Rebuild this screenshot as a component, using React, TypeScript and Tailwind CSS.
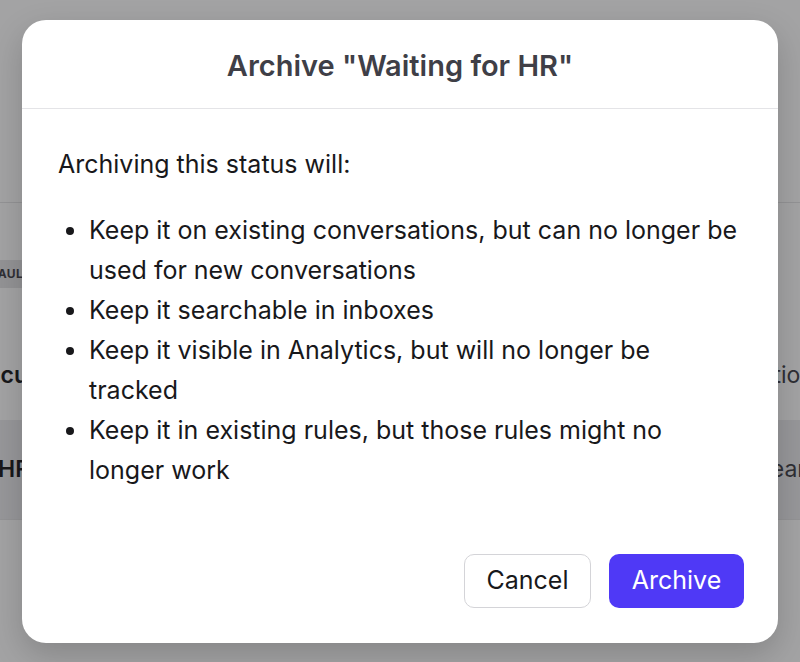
const items = [
  "Keep it on existing conversations, but can no longer be used for new conversations",
  "Keep it searchable in inboxes",
  "Keep it visible in Analytics, but will no longer be tracked",
  "Keep it in existing rules, but those rules might no longer work",
];

function BackgroundPage() {
  return (
    <div className="flex h-[662px] w-[800px] flex-col overflow-hidden bg-white text-zinc-900">
      <div className="h-[203px] border-b border-zinc-200" />
      <div className="flex h-[217px] flex-col">
        <div className="mt-[57px] flex">
          <span className="-ml-[33px] rounded bg-zinc-200 px-2 py-[5px] text-[12px] font-bold uppercase tracking-wide text-zinc-700">
            Default
          </span>
        </div>
        <div className="mt-[70px] flex items-center justify-between">
          <span className="-ml-[30px] text-[23px] font-semibold">Document</span>
          <span className="-mr-[14px] text-[23px] text-zinc-700">Resolution</span>
        </div>
      </div>
      <div className="flex h-[100px] items-center justify-between border-b border-zinc-200 bg-[#ececef]">
        <span className="-ml-[2px] text-[23px] font-semibold">HR</span>
        <span className="-mr-[6px] text-[23px] text-zinc-700">Clear</span>
      </div>
    </div>
  );
}

export default function App() {
  return (
    <div className="relative h-[662px] w-[800px] overflow-hidden font-['Inter',sans-serif]">
      <BackgroundPage />
      <div className="absolute inset-0 flex items-start justify-center bg-zinc-900/40 pt-5">
        <div className="flex h-[623px] w-[756px] flex-col rounded-[24px] bg-white shadow-[0_12px_32px_rgba(0,0,0,0.18)]">
          <div className="flex h-[89px] shrink-0 items-center justify-center border-b border-zinc-200 pt-[3px]">
            <h2 className="text-[29px] font-semibold text-zinc-700">
              Archive "Waiting for HR"
            </h2>
          </div>

          <div className="px-9 pt-[35px] text-[25px] leading-10 text-zinc-900">
            <p>Archiving this status will:</p>
            <ul className="mt-[26px] list-disc pl-[31px]">
              {items.map((item) => (
                <li key={item}>{item}</li>
              ))}
            </ul>
          </div>

          <div className="mt-auto flex justify-end gap-[18px] px-[34px] pb-[35px]">
            <button className="h-[54px] w-[127px] rounded-[10px] border border-zinc-300 bg-white text-[25px] text-zinc-900">
              Cancel
            </button>
            <button className="h-[54px] w-[135px] rounded-[10px] bg-indigo-600 text-[25px] text-white">
              Archive
            </button>
          </div>
        </div>
      </div>
    </div>
  );
}
